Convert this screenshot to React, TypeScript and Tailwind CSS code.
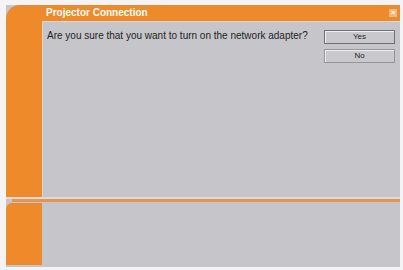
import React from 'react';

const font = { fontFamily: '"Liberation Sans", Arial, sans-serif' };

export default function App() {
  return (
    <div className="w-[403px] h-[270px] bg-[#f4f4f6] pt-[5px] pl-[6px]" style={font}>
      <div className="w-[394px] h-[262px] flex flex-col bg-[#c6c5ca]">
        {/* Top panel */}
        <div className="h-[192px] flex bg-[#ef8a2b] rounded-tl-[14px]">
          <div className="w-[36px] shrink-0" />
          <div className="flex-1 flex flex-col">
            {/* Title bar */}
            <div className="h-[16px] flex items-center justify-between pl-[4px] pr-[3px]">
              <span className="text-[10px] font-bold text-white leading-none">Projector Connection</span>
              <span className="w-[8px] h-[8px] flex items-center justify-center bg-[#f5b57a] text-white text-[8px] font-bold leading-none">×</span>
            </div>
            {/* Content */}
            <div className="flex-1 bg-[#c6c5ca] border-t border-l border-[#d6d5da] flex justify-between pl-[4px] pr-[5px] pt-[8px]">
              <p className="text-[10px] text-[#1e1e1e] leading-none pt-[1px]">
                Are you sure that you want to turn on the network adapter?
              </p>
              <div className="flex flex-col gap-[5px]">
                <button className="w-[71px] h-[14px] bg-[#c9c8cd] border border-[#6f6f75] shadow-[inset_1px_1px_0_#eeedf2] text-[8px] text-[#222] leading-none">
                  Yes
                </button>
                <button className="w-[71px] h-[14px] bg-[#c9c8cd] border border-[#96959b] shadow-[inset_1px_1px_0_#eeedf2] text-[8px] text-[#222] leading-none">
                  No
                </button>
              </div>
            </div>
          </div>
        </div>
        {/* Divider */}
        <div className="h-[2px] bg-[#dcdbe0]" />
        <div className="h-[3px] bg-[#e0955a] ml-[6px]" />
        <div className="h-[1px]" />
        {/* Bottom panel */}
        <div className="flex-1 flex">
          <div className="w-[36px] bg-[#ef8a2b] rounded-tl-[6px] mb-[2px]" />
          <div className="flex-1" />
        </div>
      </div>
    </div>
  );
}
